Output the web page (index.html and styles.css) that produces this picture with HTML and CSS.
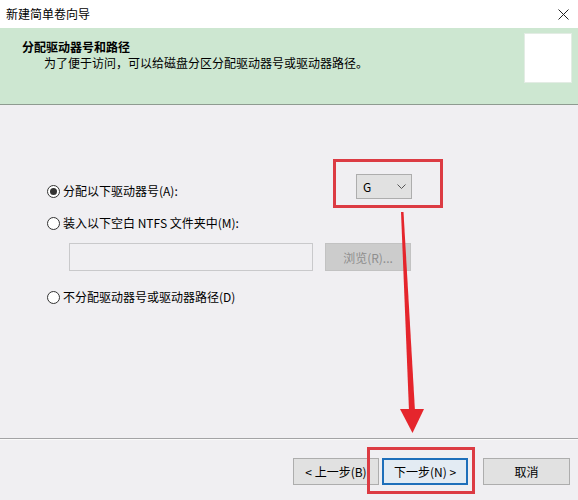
FILE: index.html
```html
<!DOCTYPE html>
<html lang="zh-CN">
<head>
  <meta charset="UTF-8">
  <meta name="viewport" content="width=device-width, initial-scale=1.0">
  <title>新建简单卷向导</title>
  <link rel="stylesheet" href="styles.css">
</head>
<body>

  <div class="window">
    <div class="titlebar">
      <span class="title">新建简单卷向导</span>
      <svg class="close" width="11" height="11" viewBox="0 0 11 11">
        <path d="M0.5 0.5 L10.5 10.5 M10.5 0.5 L0.5 10.5" stroke="#222" stroke-width="1" fill="none"/>
      </svg>
    </div>

    <div class="header">
      <div class="header-text">
        <div class="header-title">分配驱动器号和路径</div>
        <div class="header-sub">为了便于访问，可以给磁盘分区分配驱动器号或驱动器路径。</div>
      </div>
      <div class="header-icon"></div>
    </div>

    <div class="content">
      <div class="option option-letter">
        <label class="radio"><span class="dot checked"></span>分配以下驱动器号(A):</label>
        <div class="combo">
          <span>G</span>
          <svg width="9" height="5" viewBox="0 0 9 5">
            <path d="M0.5 0.5 L4.5 4.5 L8.5 0.5" stroke="#555" stroke-width="1" fill="none"/>
          </svg>
        </div>
      </div>

      <div class="option option-folder">
        <label class="radio"><span class="dot"></span>装入以下空白 NTFS 文件夹中(M):</label>
      </div>

      <div class="path-row">
        <div class="path-input"></div>
        <button class="btn btn-browse" disabled>浏览(R)...</button>
      </div>

      <div class="option option-none">
        <label class="radio"><span class="dot"></span>不分配驱动器号或驱动器路径(D)</label>
      </div>
    </div>

    <div class="footer">
      <button class="btn">&lt; 上一步(B)</button>
      <button class="btn btn-default">下一步(N) &gt;</button>
      <button class="btn btn-cancel">取消</button>
    </div>

    <!-- red markup drawn over the dialog -->
    <svg class="marks" width="578" height="500" viewBox="0 0 578 500">
      <rect x="334.5" y="160.5" width="107" height="46" fill="none" stroke="#dc3b43" stroke-width="3"/>
      <rect x="368.5" y="448.5" width="105" height="44" fill="none" stroke="#dc3b43" stroke-width="3"/>
      <polygon points="401,212 403.5,212 415,411 409,411" fill="#e5252c"/>
      <polygon points="400,409 424,409 412.5,433" fill="#e5252c"/>
    </svg>
  </div>

</body>
</html>
```

FILE: styles.css
```css
body {
  margin: 0;
  font-family: "Noto Sans CJK SC", "Noto Sans", sans-serif;
  font-size: 12px;
  color: #000;
  background: #f0eff2;
}

.window {
  position: relative;
  width: 578px;
  height: 500px;
  display: flex;
  flex-direction: column;
  overflow: hidden;
}

.titlebar {
  height: 28px;
  flex-shrink: 0;
  background: #fff;
  display: flex;
  align-items: center;
  justify-content: space-between;
  padding: 0 9px 0 6px;
  line-height: 16px;
}

.close {
  display: block;
}

.header {
  height: 76px;
  flex-shrink: 0;
  background: #cde7d1;
  border-bottom: 1px solid #8e9b90;
  display: flex;
  justify-content: space-between;
  align-items: flex-start;
  padding: 0 6px 0 22px;
}

.header-text {
  padding-top: 11px;
  line-height: 16px;
}

.header-title {
  font-weight: bold;
}

.header-sub {
  padding-left: 22px;
}

.header-icon {
  width: 46px;
  height: 48px;
  margin-top: 5px;
  background: #fff;
  border: 1px solid #e3ece4;
}

.content {
  flex: 1;
  padding: 69px 0 0 47px;
}

.option {
  display: flex;
  align-items: flex-end;
}

.option-letter {
  padding-right: 166px;
}

.option-folder {
  margin-top: 14px;
}

.option-none {
  margin-top: 17px;
}

.radio {
  display: flex;
  align-items: center;
  height: 18px;
  line-height: 18px;
  gap: 3px;
}

.dot {
  width: 11px;
  height: 11px;
  border: 1px solid #333;
  border-radius: 50%;
  background: #fff;
  display: flex;
  align-items: center;
  justify-content: center;
}

.dot.checked::after {
  content: "";
  width: 7px;
  height: 7px;
  border-radius: 50%;
  background: #333;
}

.combo {
  margin-left: auto;
  margin-bottom: 1px;
  width: 43px;
  height: 23px;
  background: #e1e1e1;
  border: 1px solid #adadad;
  display: flex;
  align-items: center;
  justify-content: space-between;
  padding: 0 5px 0 6px;
}

.path-row {
  display: flex;
  gap: 12px;
  margin: 11px 0 0 22px;
}

.path-input {
  width: 242px;
  height: 26px;
  border: 1px solid #c9c9cb;
  background: #f0eff2;
}

.btn {
  font-family: inherit;
  font-size: 12px;
  color: #000;
  width: 86px;
  height: 27px;
  padding: 0;
  background: #e1e1e1;
  border: 1px solid #adadad;
}

.btn-browse {
  height: 28px;
  background: #cccccc;
  border-color: #c2c2c2;
  color: #8e8e8e;
}

.btn-default {
  border: 2px solid #1f6fba;
  background: #e3ebf3;
}

.btn-cancel {
  margin-left: 12px;
  width: 87px;
}

.footer {
  box-sizing: border-box;
  height: 62px;
  flex-shrink: 0;
  border-top: 1px solid #a3a3a5;
  box-shadow: inset 0 1px 0 #fafafa;
  display: flex;
  justify-content: flex-end;
  align-items: flex-start;
  gap: 3px;
  padding: 19px 8px 0 0;
}

.marks {
  position: absolute;
  left: 0;
  top: 0;
  pointer-events: none;
}
```
